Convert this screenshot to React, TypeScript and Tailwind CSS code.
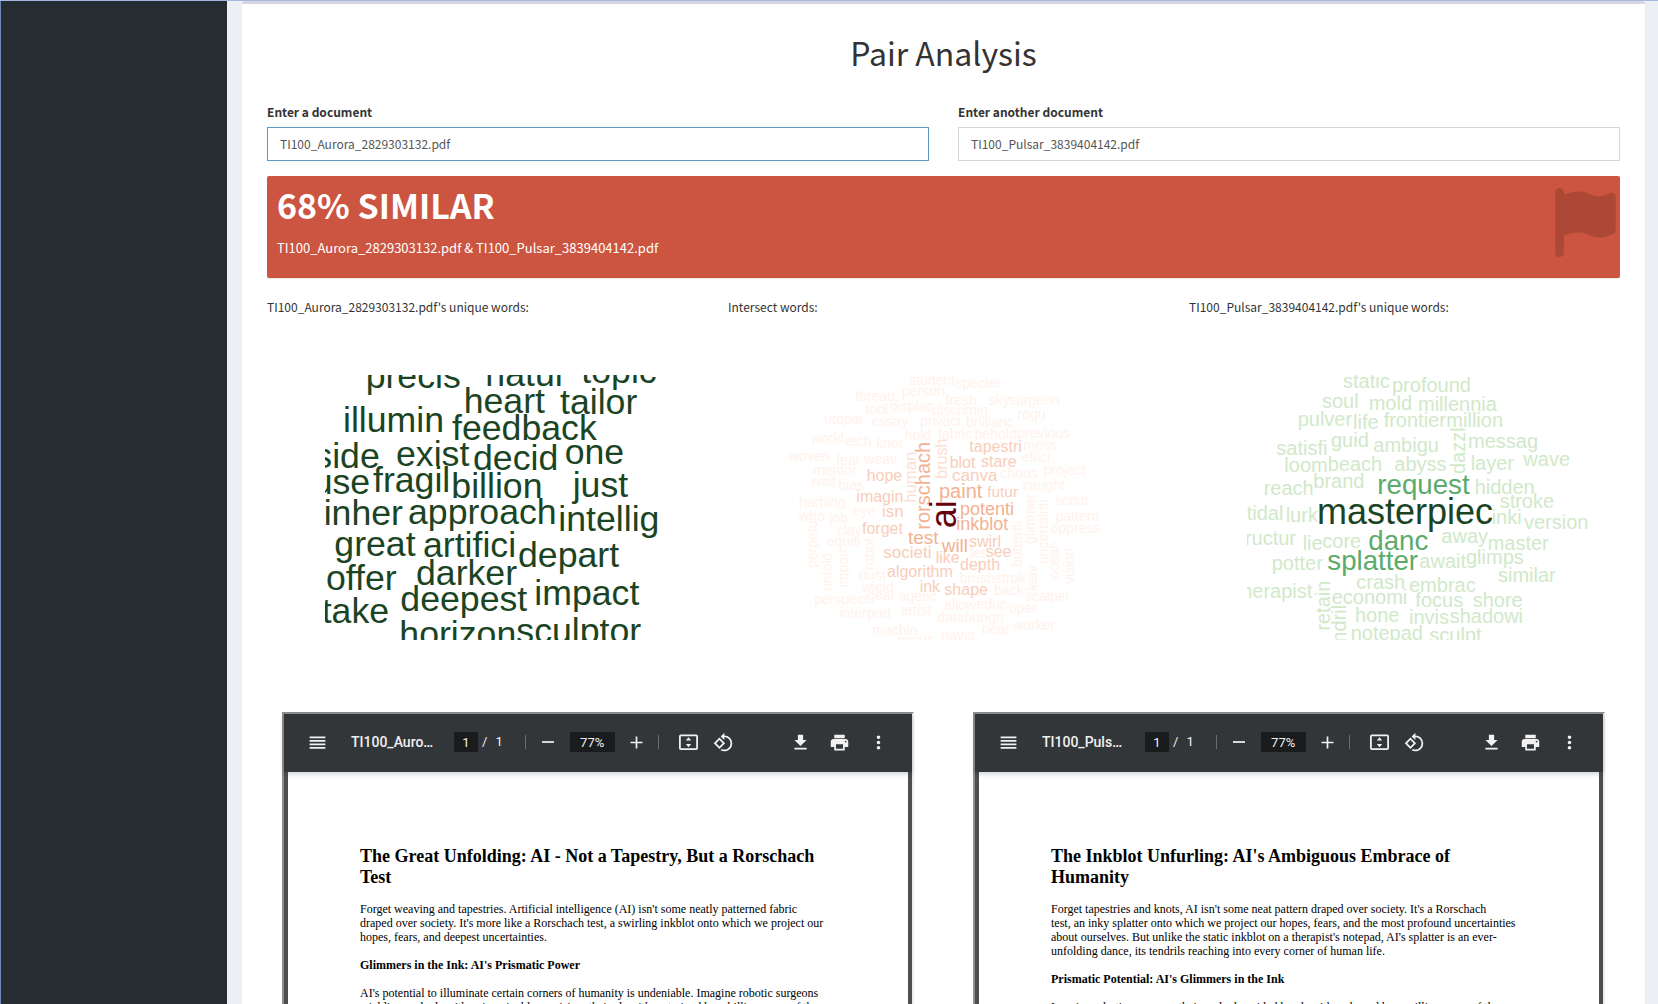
import React from "react";
import { FaFlag } from "react-icons/fa6";
import { MdRotate90DegreesCcw, MdDownload, MdPrint, MdMoreVert, MdReorder } from "react-icons/md";

// text, x, baseline y, font size, fill, turned upwards
type Word = [string, number, number, number, string, boolean?];

const DARK = "#1b4424";
const MID = "#5bab6a";
const PALE = "#d0e9c9";

const AURORA: Word[] = (
  [
    ["precis", 167, 84], ["natur", 526, 79], ["topic", 814, 69], ["heart", 461, 158],
    ["tailor", 750, 161], ["illumin", 99, 216], ["feedback", 426, 239], ["side", 13, 323],
    ["exist", 258, 318], ["decid", 489, 330], ["one", 764, 312], ["use", 8, 403],
    ["fragil", 189, 397], ["billion", 424, 414], ["just", 788, 410], ["inher", 41, 495],
    ["approach", 294, 492], ["intellig", 745, 514], ["great", 73, 587], ["artifici", 339, 591],
    ["depart", 624, 620], ["offer", 48, 690], ["darker", 318, 674], ["deepest", 271, 753],
    ["impact", 673, 735], ["take", 35, 790], ["horizon", 268, 858], ["sculptor", 619, 850],
  ] as [string, number, number][]
).map(([t, x, y]) => [t, x, y, 107, DARK]);

const F = "#fff2ec";
const E = "#fce0d4";
const M = "#f9cdb9";
const S = "#f3b193";

const SHARED: Word[] = [
  ["student", 388, 61, 42, F], ["specter", 526, 70, 42, F], ["person", 366, 92, 42, F],
  ["fresh", 496, 121, 42, F], ["thread", 226, 107, 42, F], ["sky", 626, 121, 42, F],
  ["surgeon", 687, 121, 42, F], ["tool", 257, 147, 42, F], ["displac", 330, 138, 42, F],
  ["discrimin", 458, 150, 42, F], ["rogu", 713, 163, 42, F], ["utopia", 133, 177, 42, F],
  ["essay", 274, 182, 42, F], ["privaci", 420, 184, 42, F], ["brillianc", 558, 186, 42, F],
  ["hold", 374, 224, 42, F], ["fabric", 474, 221, 42, F], ["behold", 584, 223, 42, F],
  ["previous", 712, 218, 42, F], ["world", 92, 234, 42, F], ["etch", 195, 244, 42, F],
  ["knot", 289, 249, 42, F], ["mess", 730, 256, 42, F], ["effici", 725, 291, 42, F],
  ["woven", 27, 288, 42, F], ["fear", 169, 299, 42, F], ["weav", 253, 298, 42, F],
  ["mentor", 99, 330, 42, F], ["wait", 93, 363, 42, F], ["bias", 175, 374, 42, F],
  ["harbing", 57, 426, 42, F], ["choos", 661, 340, 42, F], ["project", 791, 330, 42, F],
  ["caught", 728, 374, 42, F], ["scour", 825, 419, 42, F], ["pattern", 827, 468, 42, F],
  ["oppress", 812, 504, 42, F], ["glimmer", 764, 537, 42, F, true],
  ["uncertainti", 805, 597, 42, F, true], ["butterfli", 725, 606, 42, F, true],
  ["ocean", 836, 642, 42, F, true], ["vision", 883, 657, 42, F, true],
  ["leav", 771, 678, 42, F, true], ["who", 57, 467, 42, F], ["job", 148, 473, 42, F],
  ["eye", 218, 452, 42, F], ["clay", 170, 510, 42, F], ["equiti", 140, 543, 42, F],
  ["perpetu", 112, 609, 42, F, true], ["unfold", 156, 678, 42, F, true],
  ["import", 205, 667, 42, F, true], ["robot", 281, 615, 42, F, true],
  ["dust", 238, 646, 42, F], ["wield", 246, 681, 42, F], ["gear", 262, 705, 42, F],
  ["perspect", 103, 717, 42, F], ["agenc", 356, 708, 42, F], ["interpret", 179, 759, 42, F],
  ["artist", 362, 749, 42, F], ["machin", 277, 810, 42, F], ["misus", 352, 840, 42, F],
  ["allow", 492, 734, 42, F], ["educ", 590, 731, 42, F], ["oper", 687, 745, 42, F],
  ["datahungri", 472, 770, 42, F], ["neat", 605, 807, 42, F], ["worker", 699, 795, 42, F],
  ["navig", 484, 824, 42, F], ["scalpel", 735, 709, 42, F], ["back", 642, 690, 42, F],
  ["brushstrok", 539, 654, 42, F], ["let", 570, 578, 42, F],
  ["swirl", 567, 545, 48, M], ["see", 617, 576, 48, M], ["like", 467, 595, 48, M],
  ["depth", 540, 614, 48, M], ["algorithm", 321, 635, 48, M], ["societi", 310, 579, 51, M],
  ["forget", 246, 506, 48, M], ["isn", 306, 457, 51, M], ["ink", 419, 681, 48, M],
  ["shape", 493, 691, 48, M], ["test", 384, 537, 57, S], ["will", 485, 560, 57, S],
  ["inkblot", 529, 496, 54, S], ["potenti", 540, 449, 54, S], ["paint", 477, 398, 60, S],
  ["futur", 622, 395, 46, M], ["canva", 516, 347, 51, M], ["blot", 509, 310, 48, M],
  ["stare", 603, 305, 48, M], ["tapestri", 568, 262, 48, M], ["hope", 260, 348, 48, M],
  ["imagin", 229, 412, 48, M], ["human", 407, 413, 50, E, true],
  ["brush", 500, 341, 48, E, true], ["rorschach", 451, 494, 60, S, true],
  ["ai", 527, 490, 108, "#67000d", true],
];

const PULSAR: Word[] = [
  ["static", 339, 83, 60, PALE], ["profound", 486, 95, 60, PALE], ["soul", 276, 144, 60, PALE],
  ["mold", 416, 151, 60, PALE], ["millennia", 564, 153, 60, PALE], ["pulver", 203, 199, 60, PALE],
  ["life", 369, 206, 60, PALE], ["frontier", 461, 202, 60, PALE], ["million", 649, 202, 60, PALE],
  ["guid", 303, 261, 60, PALE], ["satisfi", 139, 285, 60, PALE], ["ambigu", 430, 276, 60, PALE],
  ["messag", 714, 264, 60, PALE], ["dazzl", 705, 342, 60, PALE, true], ["loom", 163, 335, 60, PALE],
  ["beach", 293, 332, 60, PALE], ["abyss", 493, 332, 60, PALE], ["layer", 722, 329, 60, PALE],
  ["wave", 880, 319, 60, PALE], ["reach", 101, 404, 60, PALE], ["brand", 250, 383, 60, PALE],
  ["request", 442, 402, 83, MID], ["hidden", 734, 401, 60, PALE], ["stroke", 809, 443, 60, PALE],
  ["masterpiec", 261, 493, 108, DARK], ["inki", 785, 491, 60, PALE], ["tidal", 50, 480, 60, PALE],
  ["lurk", 167, 485, 60, PALE], ["version", 882, 507, 60, PALE], ["structur", -2, 556, 60, PALE],
  ["lie", 218, 570, 60, PALE], ["core", 277, 564, 60, PALE], ["danc", 415, 570, 83, MID],
  ["away", 634, 550, 60, PALE], ["master", 773, 569, 60, PALE], ["potter", 125, 630, 60, PALE],
  ["splatter", 292, 629, 83, MID], ["await", 568, 625, 60, PALE], ["glimps", 708, 611, 60, PALE],
  ["similar", 804, 666, 60, PALE], ["therapist", 17, 713, 60, PALE], ["crash", 379, 688, 60, PALE],
  ["embrac", 537, 695, 60, PALE], ["economi", 305, 733, 60, PALE], ["focus", 556, 741, 60, PALE],
  ["shore", 728, 741, 60, PALE], ["retain", 300, 812, 60, PALE, true],
  ["tendril", 349, 898, 60, PALE, true], ["hone", 375, 785, 60, PALE], ["invis", 537, 793, 60, PALE],
  ["shadowi", 659, 789, 60, PALE], ["notepad", 362, 841, 60, PALE], ["sculpt", 598, 846, 60, PALE],
];

function WordCloud({ title, words, viewBox }: { title: string; words: Word[]; viewBox: string }) {
  return (
    <section className="min-w-0">
      <h2 className="text-[12px] leading-5">{title}</h2>
      <svg
        viewBox={viewBox}
        role="img"
        aria-label={title}
        className="mt-[58px] ml-[58px] h-[265px] w-[345px] overflow-hidden font-['Liberation_Sans',sans-serif]"
      >
        {words.map(([text, x, y, size, fill, up]) => (
          <text key={text} x={x} y={y} fontSize={size} fill={fill} transform={up ? `rotate(-90 ${x} ${y})` : undefined}>
            {text}
          </text>
        ))}
      </svg>
    </section>
  );
}

function DocumentField({ id, label, value, active }: { id: string; label: string; value: string; active?: boolean }) {
  return (
    <div>
      <label htmlFor={id} className="block text-[12px] leading-5 font-bold">
        {label}
      </label>
      <input
        id={id}
        type="text"
        defaultValue={value}
        className={
          active
            ? "mt-[5px] block h-[34px] w-full border border-[#5b9bc8] bg-white px-3 pb-[2px] text-[12px] text-[#555] outline-none"
            : "mt-[5px] block h-[34px] w-full border border-[#d2d6de] bg-white px-3 pb-[2px] text-[12px] text-[#555] outline-none"
        }
      />
    </div>
  );
}

function PdfViewer({ name, title, body }: { name: string; title: string[]; body: { heading?: boolean; lines: string[] }[] }) {
  return (
    <section className="mx-[15px] border-2 border-t-[#8c8e8f] border-r-[#ececec] border-b-[#ececec] border-l-[#8c8e8f] bg-[#4b4f52]">
      <div className="relative flex h-[58px] items-center bg-[#323639] pr-[23px] pb-[2px] pl-[23px] font-[Roboto,sans-serif] text-[13px] text-[#f1f1f1] shadow-[0_2px_5px_rgba(0,0,0,0.18)]">
        <button type="button" aria-label="Menu">
          <MdReorder size={21} />
        </button>
        <span className="ml-[23px] w-[103px] text-[14px] font-medium">{name}</span>
        <input aria-label="Page number" defaultValue="1" className="h-5 w-6 bg-[#191b1c] text-center outline-none" />
        <span className="ml-1">/</span>
        <span className="ml-2">1</span>
        <span className="ml-[22px] h-[14px] w-px bg-[#6a6d70]" />
        <button type="button" aria-label="Zoom out" className="ml-[12px] flex size-[21px] items-center justify-center">
          <span className="h-[2px] w-3 bg-[#d5d6d6]" />
        </button>
        <input aria-label="Zoom" defaultValue="77%" className="ml-[11px] h-5 w-[45px] bg-[#191b1c] text-center outline-none" />
        <button type="button" aria-label="Zoom in" className="ml-[11px] size-[21px]">
          <svg viewBox="0 0 21 21" fill="none" stroke="#f1f1f1" strokeWidth="1.7">
            <path d="M4.5 10.5h12M10.5 4.5v12" />
          </svg>
        </button>
        <span className="ml-[11px] h-[14px] w-px bg-[#6a6d70]" />
        <button type="button" aria-label="Fit to page" className="ml-[19px] size-[21px]">
          <svg viewBox="0 0 21 21" fill="#f1f1f1">
            <rect x="1.9" y="3.4" width="17.2" height="13.7" rx="1" fill="none" stroke="#f1f1f1" strokeWidth="1.8" />
            <path d="M10.5 5.2 13.2 8.4H7.8zM10.5 15.3 13.2 12.1H7.8z" />
          </svg>
        </button>
        <button type="button" aria-label="Rotate counterclockwise" className="ml-[14px]">
          <MdRotate90DegreesCcw size={21} />
        </button>
        <div className="ml-auto flex items-center gap-[18px]">
          <button type="button" aria-label="Download">
            <MdDownload size={21} />
          </button>
          <button type="button" aria-label="Print">
            <MdPrint size={21} />
          </button>
          <button type="button" aria-label="More actions">
            <MdMoreVert size={21} />
          </button>
        </div>
      </div>
      <article className="mx-1 h-[400px] bg-white pt-[74px] pl-[72px] font-['Liberation_Serif',serif] text-[12px] leading-[14px] whitespace-nowrap text-black">
        <h3 className="text-[18px] leading-[21px] font-bold">
          {title.map((line) => (
            <span key={line} className="block">
              {line}
            </span>
          ))}
        </h3>
        {body.map((block) => (
          <p key={block.lines[0]} className={block.heading ? "mt-[14px] font-bold" : "mt-[14px]"}>
            {block.lines.map((line) => (
              <span key={line} className="block">
                {line}
              </span>
            ))}
          </p>
        ))}
      </article>
    </section>
  );
}

export default function App() {
  return (
    <div className="flex h-screen overflow-hidden border-t border-[#a6b5e2] bg-[#ecf0f5] font-['Noto_Sans_CJK_SC',sans-serif] text-[#333]">
      <aside className="w-[227px] shrink-0 border-l border-[#6f86b8] bg-[#252d32]" />
      <main className="min-w-0 flex-1 pr-[13px] pl-[15px]">
        <div className="rounded-t-[3px] border-t-[3px] border-[#d2d6de] bg-white px-[25px] pt-7 shadow-[0_1px_1px_rgba(0,0,0,0.1)]">
          <h1 className="text-center text-[32px] leading-10">Pair Analysis</h1>
          <form className="mt-[30px] grid grid-cols-2 gap-[29px]">
            <DocumentField id="first" label="Enter a document" value="TI100_Aurora_2829303132.pdf" active />
            <DocumentField id="second" label="Enter another document" value="TI100_Pulsar_3839404142.pdf" />
          </form>
          <div className="relative mt-[15px] h-[102px] rounded-[2px] bg-[#cc5541] pt-[9px] pl-[10px] text-white shadow-[0_1px_1px_rgba(0,0,0,0.1)]">
            <p className="text-[34px] leading-10 font-bold">68% SIMILAR</p>
            <p className="mt-[13px] text-[13px] leading-5">TI100_Aurora_2829303132.pdf &amp; TI100_Pulsar_3839404142.pdf</p>
            <FaFlag className="absolute top-3 right-1 h-[69px] w-[61px] text-[#ad4837]" />
          </div>
          <div className="mt-[19px] grid grid-cols-3 gap-[30px]">
            <WordCloud title="TI100_Aurora_2829303132.pdf's unique words:" words={AURORA} viewBox="45 45 1035 795" />
            <WordCloud title="Intersect words:" words={SHARED} viewBox="18 30 1035 795" />
            <WordCloud title="TI100_Pulsar_3839404142.pdf's unique words:" words={PULSAR} viewBox="51 45 1035 795" />
          </div>
          <div className="mt-[72px] grid grid-cols-2 gap-[29px]">
            <PdfViewer
              name="TI100_Auro…"
              title={["The Great Unfolding: AI - Not a Tapestry, But a Rorschach", "Test"]}
              body={[
                {
                  lines: [
                    "Forget weaving and tapestries. Artificial intelligence (AI) isn't some neatly patterned fabric",
                    "draped over society. It's more like a Rorschach test, a swirling inkblot onto which we project our",
                    "hopes, fears, and deepest uncertainties.",
                  ],
                },
                { heading: true, lines: ["Glimmers in the Ink: AI's Prismatic Power"] },
                {
                  lines: [
                    "AI's potential to illuminate certain corners of humanity is undeniable. Imagine robotic surgeons",
                    "wielding scalpels with unimaginable precision, their algorithms trained by a billion maps of the",
                  ],
                },
              ]}
            />
            <PdfViewer
              name="TI100_Puls…"
              title={["The Inkblot Unfurling: AI's Ambiguous Embrace of", "Humanity"]}
              body={[
                {
                  lines: [
                    "Forget tapestries and knots, AI isn't some neat pattern draped over society. It's a Rorschach",
                    "test, an inky splatter onto which we project our hopes, fears, and the most profound uncertainties",
                    "about ourselves. But unlike the static inkblot on a therapist's notepad, AI's splatter is an ever-",
                    "unfolding dance, its tendrils reaching into every corner of human life.",
                  ],
                },
                { heading: true, lines: ["Prismatic Potential: AI's Glimmers in the Ink"] },
                { lines: ["Imagine robotic surgeons, their scalpels guided by algorithms honed by a million maps of the"] },
              ]}
            />
          </div>
        </div>
      </main>
    </div>
  );
}
